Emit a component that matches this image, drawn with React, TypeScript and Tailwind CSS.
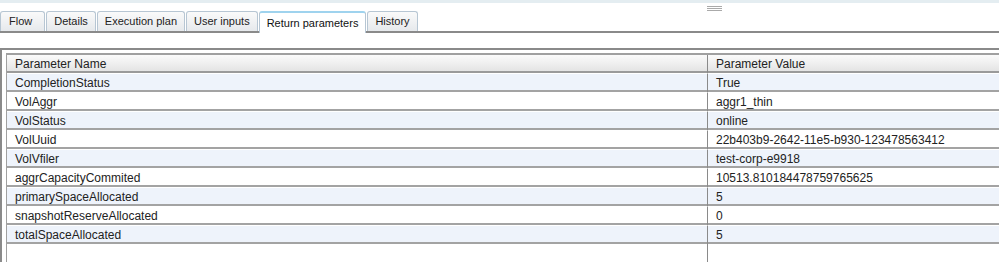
const tabs = ["Flow", "Details", "Execution plan", "User inputs", "Return parameters", "History"];

const rows: [string, string][] = [
  ["CompletionStatus", "True"],
  ["VolAggr", "aggr1_thin"],
  ["VolStatus", "online"],
  ["VolUuid", "22b403b9-2642-11e5-b930-123478563412"],
  ["VolVfiler", "test-corp-e9918"],
  ["aggrCapacityCommited", "10513.810184478759765625"],
  ["primarySpaceAllocated", "5"],
  ["snapshotReserveAllocated", "0"],
  ["totalSpaceAllocated", "5"],
];

export default function App() {
  return (
    <div
      className="w-[999px] h-[262px] overflow-hidden bg-white text-[12px] text-[#222]"
      style={{ fontFamily: '"Liberation Sans", Arial, sans-serif' }}
    >
      <div className="h-[3px] bg-[#e4edf1]" />
      <div className="relative h-[30px] flex items-end">
        <div className="absolute left-[707px] top-[3px] w-[15px] flex flex-col gap-[1px]">
          <div className="h-[1px] bg-[#aaa]" />
          <div className="h-[1px] bg-[#aaa]" />
          <div className="h-[1px] bg-[#aaa]" />
        </div>
        <div className="flex items-end w-full border-b-2 border-[#8a8a8a] text-[11px]">
          {tabs.map((t, i) => {
            const active = t === "Return parameters";
            return (
              <div
                key={t}
                className={
                  (i === 0 ? "pl-[8px] pr-[12px] " : "px-[7px] ") +
                  (active
                    ? "h-[22px] -mb-[2px] flex items-center bg-white border border-b-0 border-[#b7c6d3] border-t-2 border-t-[#9fd3ee] rounded-t-[3px] mr-[1px] text-[#111]"
                    : "h-[20px] flex items-center bg-gradient-to-b from-[#fafafa] to-[#e6e9ec] border border-b-0 border-[#b7c6d3] rounded-t-[3px] mr-[1px] text-[#222]")
                }
              >
                {t}
              </div>
            );
          })}
        </div>
      </div>
      <div className="h-[15px]" />
      <div className="border-t-2 border-l-2 border-[#8a8a8a] pt-[3px] pl-[4px] h-[214px]">
        <div className="border-t-2 border-l border-[#a0a0a0]">
          <div className="grid grid-cols-[701px_1fr] h-[18px] bg-gradient-to-b from-[#fbfbfb] to-[#e4e4e4] border-b-2 border-[#9a9a9a]">
            <div className="pl-[8px] flex items-center border-r border-[#8a8a8a]">Parameter Name</div>
            <div className="pl-[8px] flex items-center">Parameter Value</div>
          </div>
          {rows.map(([n, v], i) => (
            <div
              key={n}
              className={
                "grid grid-cols-[701px_1fr] h-[19px] border-b-2 border-[#a3a3a3] " +
                (i % 2 === 0 ? "bg-[#eef3fb]" : "bg-white")
              }
            >
              <div className="pl-[8px] flex items-center border-r border-[#8a8a8a] border-t border-t-white">{n}</div>
              <div className="pl-[8px] flex items-center border-t border-t-white">{v}</div>
            </div>
          ))}
          <div className="grid grid-cols-[701px_1fr] h-[30px]">
            <div className="border-r border-[#8a8a8a]" />
            <div />
          </div>
        </div>
      </div>
    </div>
  );
}
